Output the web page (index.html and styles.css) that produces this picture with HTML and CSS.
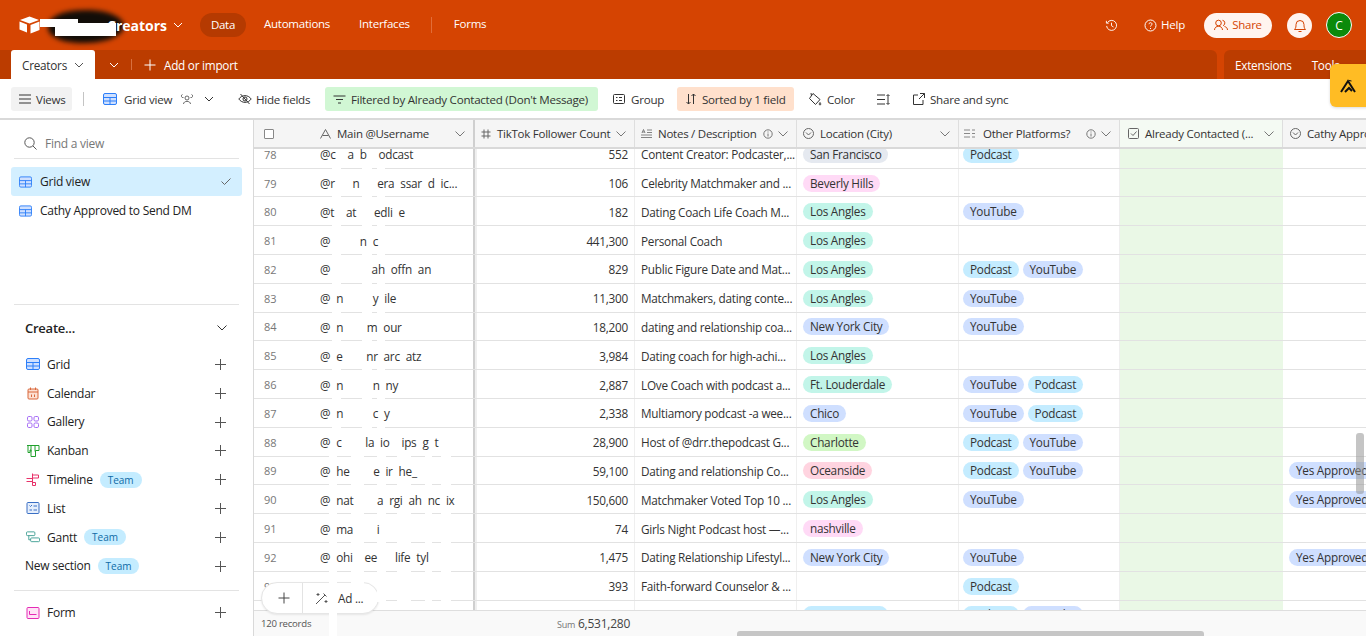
FILE: index.html
```html
<!DOCTYPE html>
<html lang="en">
<head>
<meta charset="utf-8">
<title>Creators</title>
<link rel="stylesheet" href="styles.css">
</head>
<body>
<header class="top">
  <div class="brand">
    <svg class="logo" width="22" height="18" viewBox="0 0 22 18"><path fill="#fff" d="M10.500 0.500 1 4l9.500 3.600L20 4z"/><path fill="#fff" d="M11.500 9v8.500l9-3.500V5.500z"/><path fill="#fff" d="M0.500 5.500v8l7.500 3V8.500z"/></svg>
    <i class="smudge"></i>
    <span class="base-name">Creators</span>
    <i class="blank blank-a"></i>
    <i class="blank blank-b"></i>
    <svg class="chev" width="10" height="6" viewBox="0 0 10 6"><path d="M1 1l4 4 4-4" fill="none" stroke="#fff" stroke-width="1"/></svg>
  </div>
  <nav class="nav">
    <a class="nav-pill">Data</a>
    <a class="nav-link">Automations</a>
    <a class="nav-link">Interfaces</a>
    <i class="nav-div"></i>
    <a class="nav-link">Forms</a>
  </nav>
  <div class="top-right">
    <svg width="13" height="13" viewBox="0 0 14 14" fill="none" stroke="#fff"><path d="M2.500 4a5.400 5.400 0 1 1-.8 3.500M1.500 2v2.500h2.500M7 4v3.300l2.200 1.300"/></svg>
    <span class="help"><svg width="13" height="13" viewBox="0 0 13 13" fill="none" stroke="#fff"><circle cx="6.500" cy="6.500" r="5.500"/><path d="M5 5.200c0-2 3-2 3-.1 0 1.200-1.500 1.200-1.500 2.500M6.500 9v1"/></svg>Help</span>
    <span class="share"><svg width="14" height="12" viewBox="0 0 14 12" fill="none" stroke="#d54402"><circle cx="4.500" cy="4" r="2.800"/><path d="M.5 11c0-5 8-5 8 0M8.500 1.300a2.800 2.800 0 0 1 .5 5.400M10.500 7.500c2 .5 3 1.800 3 3.500"/></svg>Share</span>
    <span class="bell"><svg width="14" height="15" viewBox="0 0 14 15" fill="none" stroke="#d54402"><path d="M1.500 11.500h11c-1.500-1.500-1.500-3-1.500-5a4 4 0 0 0-8 0c0 2 0 3.500-1.500 5zM5.500 13.500h3"/></svg></span>
    <span class="avatar">C</span>
  </div>
</header>

<div class="tabs">
  <div class="tabs-main">
    <div class="tab-active">Creators<svg width="10" height="6" viewBox="0 0 10 6"><path d="M1 1l4 4 4-4" fill="none" stroke="#555"/></svg></div>
    <svg class="tab-chev" width="10" height="6" viewBox="0 0 10 6"><path d="M1 1l4 4 4-4" fill="none" stroke="#fff"/></svg>
    <i class="tab-div"></i>
    <svg width="12" height="12" viewBox="0 0 12 12"><path d="M6 .5v11M.5 6h11" stroke="#fff" fill="none"/></svg>
    <span class="add-import">Add or import</span>
  </div>
  <div class="tabs-side"><span>Extensions</span><span>Tools</span></div>
</div>

<div class="toolbar">
  <span class="tool tool-views"><svg width="12" height="10" viewBox="0 0 12 10"><path d="M0 1h12M0 5h12M0 9h12" stroke="#333" fill="none"/></svg>Views</span>
  <i class="tool-div"></i>
  <span class="tool tool-grid">
    <svg class="blue-ic" width="14" height="12" viewBox="0 0 14 12"><rect x=".5" y=".5" width="13" height="11" rx="1.500" fill="#cfe0ff" stroke="#2d7ff9"/><path d="M.5 4.500h13M.5 8h13M7 4.500V11.500" stroke="#2d7ff9" fill="none"/></svg>
    Grid view
    <svg class="people" width="14" height="12" viewBox="0 0 14 12" fill="none" stroke="#444" stroke-width=".8"><circle cx="7" cy="5" r="2"/><path d="M3.500 11c0-3.500 7-3.500 7 0M2.500 1.500a1.500 1.500 0 1 0 1 3M11.500 1.500a1.500 1.500 0 1 1-1 3"/></svg>
    <svg class="tool-chev" width="10" height="6" viewBox="0 0 10 6"><path d="M1 1l4 4 4-4" fill="none" stroke="#333"/></svg>
  </span>
  <span class="tool tool-hide"><svg width="14" height="12" viewBox="0 0 14 12" fill="none" stroke="#333"><path d="M.8 6C4 1.500 10 1.500 13.200 6 10 10.500 4 10.500.8 6z"/><circle cx="7" cy="6" r="2"/><path d="M2.500 1l9 10"/></svg>Hide fields</span>
  <span class="tool tool-filter"><svg width="13" height="9" viewBox="0 0 13 9"><path d="M.5 1h12M3 4.500h7M5 8h3" stroke="#333" fill="none"/></svg>Filtered by Already Contacted (Don't Message)</span>
  <span class="tool tool-group"><svg width="12" height="10" viewBox="0 0 12 10" fill="none" stroke="#333"><rect x=".5" y=".5" width="11" height="9" rx="1"/><path d="M3 3.500h1.500M6 3.500h3M3 6.500h1.500M6 6.500h3"/></svg>Group</span>
  <span class="tool tool-sort"><svg width="10" height="12" viewBox="0 0 10 12" fill="none" stroke="#333"><path d="M2.500 1v10M.5 9l2 2 2-2M7.500 11V1M5.500 3l2-2 2 2"/></svg>Sorted by 1 field</span>
  <span class="tool tool-color"><svg width="14" height="14" viewBox="0 0 14 14" fill="none" stroke="#333"><path d="M5 1.500l7 6-4.500 5L1.500 6.500zM3.500 4L3 1M12 10.500c1 1 1 2.500 0 2.500s-1-1.500 0-2.500z"/></svg>Color</span>
  <span class="tool tool-height"><svg width="13" height="11" viewBox="0 0 13 11" fill="none" stroke="#333"><path d="M0 1h8M0 5.500h8M0 10h8M11 1v9M9.500 2l1.500-1.500L12.500 2M9.500 9l1.500 1.500L12.500 9"/></svg></span>
  <span class="tool tool-sync"><svg width="12" height="12" viewBox="0 0 12 12" fill="none" stroke="#333"><path d="M5 2H.5v9.500H10V7M7 .5h4.500V5M11.500 .5 6 6"/></svg>Share and sync</span>
</div>

<div class="badge-tab"><svg width="17" height="14" viewBox="0 0 17 14" fill="none" stroke="#111" stroke-width="2"><path d="M1 13 8 2l7 11"/><path d="M5 13l4-4 3 3"/><path d="M9 1.500l2.500 .5" stroke-width="1"/></svg></div>

<main class="workspace">
  <aside class="sidebar">
    <div class="find"><svg width="13" height="13" viewBox="0 0 13 13" fill="none" stroke="#555"><circle cx="5.500" cy="5.500" r="4.700"/><path d="M9 9l3.500 3.500"/></svg><span>Find a view</span></div>
    <div class="view view-active">
      <svg width="13" height="12" viewBox="0 0 14 12"><rect x=".5" y=".5" width="13" height="11" rx="1.500" fill="#cfe0ff" stroke="#2d7ff9"/><path d="M.5 4.500h13M.5 8h13M7 4.500V11.500" stroke="#2d7ff9" fill="none"/></svg>
      <span class="view-name">Grid view</span>
      <svg width="10" height="7" viewBox="0 0 10 7"><path d="M.5 3.500 3.500 6.500 9.500.5" fill="none" stroke="#666"/></svg>
    </div>
    <div class="view">
      <svg width="13" height="12" viewBox="0 0 14 12"><rect x=".5" y=".5" width="13" height="11" rx="1.500" fill="#cfe0ff" stroke="#2d7ff9"/><path d="M.5 4.500h13M.5 8h13M7 4.500V11.500" stroke="#2d7ff9" fill="none"/></svg>
      <span class="view-name">Cathy Approved to Send DM</span>
    </div>
    <div class="spacer"></div>
    <div class="create">
      <div class="create-head"><span>Create...</span><svg width="10" height="6" viewBox="0 0 10 6"><path d="M.5.500l4.500 4.500 4.500-4.500" fill="none" stroke="#333"/></svg></div>
      <div class="create-item"><svg width="13" height="12" viewBox="0 0 14 12"><rect x=".5" y=".5" width="13" height="11" rx="1.500" fill="#cfe0ff" stroke="#2d7ff9"/><path d="M.5 4.500h13M.5 8h13M7 4.500V11.500" stroke="#2d7ff9" fill="none"/></svg><span>Grid</span><b class="plus"></b></div>
      <div class="create-item"><svg width="13" height="13" viewBox="0 0 13 13" fill="none" stroke="#d9683c"><rect x="1.500" y="2" width="10" height="10" rx="1" fill="#fde0d2"/><path d="M1.500 5h10M4 .5V3M9 .5V3M5 7.500v2.500M8 7.500v2.500"/></svg><span>Calendar</span><b class="plus"></b></div>
      <div class="create-item"><svg width="13" height="12" viewBox="0 0 13 12" fill="none" stroke="#a56bf5"><rect x="1" y=".5" width="4.500" height="4.500" rx="1.300"/><rect x="7.500" y=".5" width="4.500" height="4.500" rx="1.300"/><rect x="1" y="7" width="4.500" height="4.500" rx="1.300"/><rect x="7.500" y="7" width="4.500" height="4.500" rx="1.300"/></svg><span>Gallery</span><b class="plus"></b></div>
      <div class="create-item"><svg width="13" height="12" viewBox="0 0 13 12" fill="none" stroke="#20a02c"><path d="M.5.500h12v5h-3.500v6h-4.500v-6.500H3.500v2.500H1.500V.5M4.500.5v6M8.500.5v6"/></svg><span>Kanban</span><b class="plus"></b></div>
      <div class="create-item"><svg width="14" height="13" viewBox="0 0 14 13" fill="none" stroke="#e8326a"><path d="M6.500.5v12M6.500 2h6v3h-6M.5 5.500h6v3h-6M6.500 9.500h3v3h-3"/></svg><span>Timeline</span><em class="team">Team</em><b class="plus"></b></div>
      <div class="create-item"><svg width="13" height="12" viewBox="0 0 13 12" fill="none" stroke="#3a6fc4"><rect x=".5" y=".5" width="12" height="11" rx="1" fill="#e6effc"/><path d="M3 3.500l1 1 1.500-1.500M7 4h3.500M3 8h2.500M7 8h3.500"/></svg><span>List</span><b class="plus"></b></div>
      <div class="create-item"><svg width="15" height="12" viewBox="0 0 15 12" fill="none" stroke="#3f9e93"><rect x=".5" y=".5" width="9" height="4" rx="1"/><rect x="5" y="7" width="9.500" height="4" rx="1"/><path d="M3 4.500V9h2"/></svg><span>Gantt</span><em class="team">Team</em><b class="plus"></b></div>
      <div class="create-item create-section"><span>New section</span><em class="team">Team</em><b class="plus"></b></div>
    </div>
    <div class="form-block">
      <div class="create-item"><svg width="13" height="12" viewBox="0 0 13 12" fill="none" stroke="#e42bb5"><rect x=".5" y=".5" width="12" height="11" rx="1" fill="#ffe3f6"/><path d="M3 4v3.500h7"/></svg><span>Form</span><b class="plus"></b></div>
    </div>
  </aside>

  <section class="grid">
    <div class="row head">
      <div class="c c-main"><span class="check"></span><svg class="ficon" width="11" height="10" viewBox="0 0 11 10"><path d="M.5 9.500 5.500.5l5 9M2.500 6.500h6" fill="none" stroke="#666"/></svg><span class="fname">Main @Username</span><svg class="hchev" width="10" height="6" viewBox="0 0 10 6"><path d="M.5.500l4.500 4.500 4.500-4.500" fill="none" stroke="#777"/></svg></div>
      <div class="c c-num"><svg class="ficon" width="10" height="10" viewBox="0 0 10 10"><path d="M3 .5v9M7 .5v9M.5 3h9M.5 7h9" fill="none" stroke="#666"/></svg><span class="fname">TikTok Follower Count</span><svg class="hchev" width="10" height="6" viewBox="0 0 10 6"><path d="M.5.500l4.500 4.500 4.500-4.500" fill="none" stroke="#777"/></svg></div>
      <div class="c c-notes"><svg class="ficon" width="11" height="9" viewBox="0 0 11 9"><path d="M1 4 2.500.5 4 4M1.500 3h2M6 1h5M6 3.500h5M0 6h11M0 8.500h11" fill="none" stroke="#666" stroke-width=".8"/></svg><span class="fname">Notes / Description</span><svg class="info" width="10" height="10" viewBox="0 0 10 10" fill="none" stroke="#777"><circle cx="5" cy="5" r="4.200"/><path d="M5 4.500v3M5 2.500v1"/></svg><svg class="hchev" width="10" height="6" viewBox="0 0 10 6"><path d="M.5.500l4.500 4.500 4.500-4.500" fill="none" stroke="#777"/></svg></div>
      <div class="c c-loc"><svg class="ficon" width="11" height="11" viewBox="0 0 11 11" fill="none" stroke="#666"><circle cx="5.500" cy="5.500" r="5"/><path d="M3 4.500l2.500 2.500L8 4.500"/></svg><span class="fname">Location (City)</span><svg class="hchev" width="10" height="6" viewBox="0 0 10 6"><path d="M.5.500l4.500 4.500 4.500-4.500" fill="none" stroke="#777"/></svg></div>
      <div class="c c-other"><svg class="ficon" width="11" height="9" viewBox="0 0 11 9" fill="none" stroke="#888"><path d="M0 1h6M0 4.500h6M0 8h6M8 1h3M8 4.500h3M8 8h3"/></svg><span class="fname">Other Platforms?</span><svg class="info" width="10" height="10" viewBox="0 0 10 10" fill="none" stroke="#777"><circle cx="5" cy="5" r="4.200"/><path d="M5 4.500v3M5 2.500v1"/></svg><svg class="hchev" width="10" height="6" viewBox="0 0 10 6"><path d="M.5.500l4.500 4.500 4.500-4.500" fill="none" stroke="#777"/></svg></div>
      <div class="c c-done head-done"><svg class="ficon" width="11" height="11" viewBox="0 0 11 11" fill="none" stroke="#666"><rect x=".5" y=".5" width="10" height="10" rx="1"/><path d="M3 5.500l2 2 3.500-4"/></svg><span class="fname">Already Contacted (...</span><svg class="hchev" width="10" height="6" viewBox="0 0 10 6"><path d="M.5.500l4.500 4.500 4.500-4.500" fill="none" stroke="#777"/></svg></div>
      <div class="c c-cathy"><svg class="ficon" width="11" height="11" viewBox="0 0 11 11" fill="none" stroke="#666"><circle cx="5.500" cy="5.500" r="5"/><path d="M3 4.500l2.500 2.500L8 4.500"/></svg><span class="fname">Cathy Appro</span></div>
    </div>

    <div class="body">
      <div class="rows">
        <div class="row"><div class="c c-main"><span class="rn">78</span><span class="u">@c<s>xx</s>a<s>x</s>b<s>xx</s>odcast</span></div><div class="c c-num">552</div><div class="c c-notes">Content Creator: Podcaster,...</div><div class="c c-loc"><span class="p gray">San Francisco</span></div><div class="c c-other"><span class="p cyan">Podcast</span></div><div class="c c-done"></div><div class="c c-cathy"></div></div>
        <div class="row"><div class="c c-main"><span class="rn">79</span><span class="u">@r<s>xxx</s>n<s>xxx</s>era<s>x</s>ssar<s>x</s>d<s>x</s>ic...</span></div><div class="c c-num">106</div><div class="c c-notes">Celebrity Matchmaker and ...</div><div class="c c-loc"><span class="p pink">Beverly Hills</span></div><div class="c c-other"></div><div class="c c-done"></div><div class="c c-cathy"></div></div>
        <div class="row"><div class="c c-main"><span class="rn">80</span><span class="u">@t<s>xx</s>at<s>xxx</s>edli<s>x</s>e</span></div><div class="c c-num">182</div><div class="c c-notes">Dating Coach Life Coach M...</div><div class="c c-loc"><span class="p teal">Los Angles</span></div><div class="c c-other"><span class="p blue">YouTube</span></div><div class="c c-done"></div><div class="c c-cathy"></div></div>
        <div class="row"><div class="c c-main"><span class="rn">81</span><span class="u">@<s>xxxxx</s>n<s>x</s>c</span></div><div class="c c-num">441,300</div><div class="c c-notes">Personal Coach</div><div class="c c-loc"><span class="p teal">Los Angles</span></div><div class="c c-other"></div><div class="c c-done"></div><div class="c c-cathy"></div></div>
        <div class="row"><div class="c c-main"><span class="rn">82</span><span class="u">@<s>xxxxxxx</s>ah<s>x</s>offn<s>x</s>an</span></div><div class="c c-num">829</div><div class="c c-notes">Public Figure Date and Mat...</div><div class="c c-loc"><span class="p teal">Los Angles</span></div><div class="c c-other"><span class="p cyan">Podcast</span><span class="p blue">YouTube</span></div><div class="c c-done"></div><div class="c c-cathy"></div></div>
        <div class="row"><div class="c c-main"><span class="rn">83</span><span class="u">@<s>x</s>n<s>xxxxx</s>y<s>x</s>ile</span></div><div class="c c-num">11,300</div><div class="c c-notes">Matchmakers, dating conte...</div><div class="c c-loc"><span class="p teal">Los Angles</span></div><div class="c c-other"><span class="p blue">YouTube</span></div><div class="c c-done"></div><div class="c c-cathy"></div></div>
        <div class="row"><div class="c c-main"><span class="rn">84</span><span class="u">@<s>x</s>n<s>xxxx</s>m<s>x</s>our</span></div><div class="c c-num">18,200</div><div class="c c-notes">dating and relationship coa...</div><div class="c c-loc"><span class="p blue">New York City</span></div><div class="c c-other"><span class="p blue">YouTube</span></div><div class="c c-done"></div><div class="c c-cathy"></div></div>
        <div class="row"><div class="c c-main"><span class="rn">85</span><span class="u">@<s>x</s>e<s>xxxx</s>nr<s>x</s>arc<s>x</s>atz</span></div><div class="c c-num">3,984</div><div class="c c-notes">Dating coach for high-achi...</div><div class="c c-loc"><span class="p teal">Los Angles</span></div><div class="c c-other"></div><div class="c c-done"></div><div class="c c-cathy"></div></div>
        <div class="row"><div class="c c-main"><span class="rn">86</span><span class="u">@<s>x</s>n<s>xxxxx</s>n<s>x</s>ny</span></div><div class="c c-num">2,887</div><div class="c c-notes">LOve Coach with podcast a...</div><div class="c c-loc"><span class="p teal">Ft. Louderdale</span></div><div class="c c-other"><span class="p blue">YouTube</span><span class="p cyan">Podcast</span></div><div class="c c-done"></div><div class="c c-cathy"></div></div>
        <div class="row"><div class="c c-main"><span class="rn">87</span><span class="u">@<s>x</s>n<s>xxxxx</s>c<s>x</s>y</span></div><div class="c c-num">2,338</div><div class="c c-notes">Multiamory podcast -a wee...</div><div class="c c-loc"><span class="p blue">Chico</span></div><div class="c c-other"><span class="p blue">YouTube</span><span class="p cyan">Podcast</span></div><div class="c c-done"></div><div class="c c-cathy"></div></div>
        <div class="row"><div class="c c-main"><span class="rn">88</span><span class="u">@<s>x</s>c<s>xxxx</s>la<s>x</s>io<s>xx</s>ips<s>x</s>g<s>x</s>t</span></div><div class="c c-num">28,900</div><div class="c c-notes">Host of @drr.thepodcast G...</div><div class="c c-loc"><span class="p green">Charlotte</span></div><div class="c c-other"><span class="p cyan">Podcast</span><span class="p blue">YouTube</span></div><div class="c c-done"></div><div class="c c-cathy"></div></div>
        <div class="row"><div class="c c-main"><span class="rn">89</span><span class="u">@<s>x</s>he<s>xxxx</s>e<s>x</s>ir<s>x</s>he_</span></div><div class="c c-num">59,100</div><div class="c c-notes">Dating and relationship Co...</div><div class="c c-loc"><span class="p rose">Oceanside</span></div><div class="c c-other"><span class="p cyan">Podcast</span><span class="p blue">YouTube</span></div><div class="c c-done"></div><div class="c c-cathy"><span class="p blue">Yes Approved</span></div></div>
        <div class="row"><div class="c c-main"><span class="rn">90</span><span class="u">@<s>x</s>nat<s>xxxx</s>a<s>x</s>rgi<s>x</s>ah<s>x</s>nc<s>x</s>ix</span></div><div class="c c-num">150,600</div><div class="c c-notes">Matchmaker Voted Top 10 ...</div><div class="c c-loc"><span class="p teal">Los Angles</span></div><div class="c c-other"><span class="p blue">YouTube</span></div><div class="c c-done"></div><div class="c c-cathy"><span class="p blue">Yes Approved</span></div></div>
        <div class="row"><div class="c c-main"><span class="rn">91</span><span class="u">@<s>x</s>ma<s>xxxx</s>i</span></div><div class="c c-num">74</div><div class="c c-notes">Girls Night Podcast host —...</div><div class="c c-loc"><span class="p pink">nashville</span></div><div class="c c-other"></div><div class="c c-done"></div><div class="c c-cathy"></div></div>
        <div class="row"><div class="c c-main"><span class="rn">92</span><span class="u">@<s>x</s>ohi<s>xx</s>ee<s>xxx</s>life<s>x</s>tyl</span></div><div class="c c-num">1,475</div><div class="c c-notes">Dating Relationship Lifestyl...</div><div class="c c-loc"><span class="p blue">New York City</span></div><div class="c c-other"><span class="p blue">YouTube</span></div><div class="c c-done"></div><div class="c c-cathy"><span class="p blue">Yes Approved</span></div></div>
        <div class="row"><div class="c c-main"><span class="rn">93</span></div><div class="c c-num">393</div><div class="c c-notes">Faith-forward Counselor &amp; ...</div><div class="c c-loc"></div><div class="c c-other"><span class="p cyan">Podcast</span></div><div class="c c-done"></div><div class="c c-cathy"></div></div>
        <div class="row"><div class="c c-main"></div><div class="c c-num"></div><div class="c c-notes"></div><div class="c c-loc"><span class="p cyan">San Francisco</span></div><div class="c c-other"><span class="p cyan">Podcast</span><span class="p blue">YouTube</span></div><div class="c c-done"></div><div class="c c-cathy"></div></div>
      </div>
    </div>

    <div class="foot">
      <span class="records">120 records</span>
      <span class="sum"><small>Sum</small> 6,531,280</span>
    </div>
    <div class="add-bar"><svg width="12" height="12" viewBox="0 0 12 12"><path d="M6 .5v11M.5 6h11" stroke="#444" fill="none"/></svg><i></i><svg width="14" height="14" viewBox="0 0 14 14" fill="none" stroke="#555"><path d="M1 13 10 4M8.500 2.500l3 3M3 2v3M1.500 3.500h3M11 9v3M9.500 10.500h3"/></svg><span>Ad ...</span></div>
    <div class="redact-top"></div>
    <div class="redact-low"></div>
    <div class="vscroll"></div>
    <div class="hscroll"></div>
  </section>
</main>
</body>
</html>
```
FILE: styles.css
```css
* { box-sizing: border-box; }
html, body { margin: 0; height: 636px; overflow: hidden; background: #fff; }
body { font-family: "Open Sans", "Noto Sans", sans-serif; font-size: 11.75px; color: #333; position: relative; letter-spacing: -0.25px; }
svg { flex: none; display: block; }

.top { height: 50px; background: #d54402; display: flex; align-items: center; color: #fff; padding: 0 14px 0 19px; font-size: 11.5px; }
.brand { display: flex; align-items: center; width: 181px; }
.base-name { font-size: 14px; font-weight: 700; margin-left: 66px; letter-spacing: 0; position: relative; z-index: 1; }
.smudge { position: absolute; left: 48px; top: 10px; width: 76px; height: 33px; background: #120d08; border-radius: 45% 55% 50% 50%; filter: blur(2.5px); transform: rotate(-2deg); }
.blank { position: absolute; background: #fff; z-index: 2; }
.blank-a { left: 40px; top: 19px; width: 38px; height: 8px; }
.blank-b { left: 55px; top: 23px; width: 61px; height: 13px; }
.chev { margin-left: 6px; }
.nav { display: flex; align-items: center; line-height: 16px; }
.nav-pill { background: #b53a01; border-radius: 12px; height: 24px; width: 46px; display: flex; align-items: center; justify-content: center; margin-right: 18px; padding-bottom: 1px; }
.nav-link { margin-right: 29px; padding-bottom: 2px; }
.nav-div { width: 1px; height: 16px; background: #e26d38; margin-right: 22px; margin-left: -8px; }
.top-right { margin-left: auto; display: flex; align-items: center; }
.help { display: flex; align-items: center; gap: 4px; margin-left: 26px; line-height: 14px; }
.share { display: flex; align-items: center; gap: 4px; background: #fff4ef; color: #d54402; border-radius: 13px; height: 25px; width: 68px; justify-content: center; margin-left: 19px; padding-bottom: 1px; }
.bell { width: 25px; height: 25px; border-radius: 50%; background: #fff4ef; display: flex; align-items: center; justify-content: center; margin-left: 15px; }
.avatar { width: 26px; height: 26px; border-radius: 50%; background: #0b8a0b; border: 1px solid #fff; display: flex; align-items: center; justify-content: center; margin-left: 14px; font-size: 12px; }

.tabs { height: 29px; display: flex; background: #d54402; color: #fff; }
.tabs-main { width: 1217px; background: #bb3c00; display: flex; align-items: center; border-top-right-radius: 6px; padding-left: 11px; }
.tab-active { width: 84px; height: 29px; background: #fff; color: #333; display: flex; align-items: center; gap: 7px; padding: 1px 0 0 11px; border-radius: 3px 3px 0 0; }
.tab-chev { margin-left: 14px; }
.tab-div { width: 1px; height: 11px; background: #d8703f; margin: 0 12px; }
.add-import { margin-left: 8px; }
.tabs-side { margin-left: 7px; flex: 1; background: #bb3c00; display: flex; align-items: center; gap: 20px; padding: 1px 0 0 11px; border-top-left-radius: 6px; overflow: hidden; }

.toolbar { height: 41px; border-bottom: 2px solid #d9d9d9; display: flex; align-items: center; padding: 1px 0 0 11px; font-size: 11.6px; white-space: nowrap; }
.tool { display: flex; align-items: center; gap: 5px; height: 24px; border-radius: 3px; flex: none; }
.tool-views { background: #f2f2f2; width: 61px; padding-left: 8px; }
.tool-div { width: 1px; height: 14px; background: #c4c4c4; margin: 0 19px 0 11px; flex: none; }
.tool-grid { gap: 0; width: 135px; }
.tool-grid .blue-ic { margin-right: 7px; }
.people { margin-left: 8px; }
.tool-chev { margin-left: 10px; }
.tool-hide { width: 87px; gap: 4px; }
.tool-filter { background: #d1f7d4; width: 273px; padding: 0 8px; }
.tool-group { margin-left: 15px; width: 49px; gap: 6px; }
.tool-sort { background: #ffe0cc; width: 117px; margin-left: 15px; padding-left: 9px; gap: 6px; }
.tool-color { margin-left: 14px; width: 47px; }
.tool-height { margin-left: 22px; width: 13px; }
.tool-sync { margin-left: 23px; }

.badge-tab { position: absolute; left: 1330px; top: 64px; width: 40px; height: 43px; background: #ffbc24; border-radius: 6px 0 0 6px; display: flex; align-items: center; justify-content: center; box-shadow: 0 1px 3px rgba(0,0,0,.15); padding-right: 4px; }

.workspace { display: flex; height: 516px; }
.sidebar { width: 253px; flex: none; padding: 0 11px; display: flex; flex-direction: column; font-size: 12px; }
.find { height: 39px; margin: 0 3px; border-bottom: 1px solid #e3e3e3; display: flex; align-items: center; gap: 8px; padding: 8px 0 0 10px; }
.find span { color: #777; }
.view { height: 29px; display: flex; align-items: center; padding: 0 11px 0 8px; gap: 8px; border-radius: 3px; }
.view-active { background: #d3efff; margin-top: 8px; }
.view-name { flex: 1; color: #222; }
.spacer { height: 80px; border-bottom: 1px solid #e3e3e3; margin: 0 3px; flex: none; }
.create { margin: 0 3px; border-bottom: 1px solid #e3e3e3; padding-bottom: 10px; }
.create-head { display: flex; align-items: center; justify-content: space-between; height: 45px; padding: 0 12px 0 11px; font-size: 13px; font-weight: 600; color: #222; }
.create-item { display: flex; align-items: center; height: 28.8px; padding-left: 12px; color: #222; position: relative; }
.create-item > svg { margin-right: 7px; width: 14px; }
.create-section { padding-left: 11px; }
.team { font-style: normal; font-size: 10px; line-height: 14px; background: #c4ecff; color: #0e6aa6; border-radius: 8px; padding: 1px 8px; margin-left: 7px; letter-spacing: 0; }
.plus { position: absolute; right: 13px; top: 9px; width: 11px; height: 11px; background: linear-gradient(#555,#555) center/11px 1px no-repeat, linear-gradient(#555,#555) center/1px 11px no-repeat; }
.form-block { margin: 7px 3px 0; }

.grid { flex: 1; min-width: 0; position: relative; border-left: 1px solid #d9d9d9; overflow: hidden; display: flex; flex-direction: column; }
.row { display: flex; height: 28.8px; border-bottom: 1px solid #e2e2e2; flex: none; }
.c { flex: none; display: flex; align-items: center; padding: 1px 6px 0; white-space: nowrap; overflow: hidden; border-right: 1px solid #efefef; color: #333; }
.c-main { width: 221px; border-right: 2px solid #cfcfcf; padding: 1px 0 0 10px; box-shadow: 2px 0 0 #efefef; }
.c-num { width: 160px; justify-content: flex-end; }
.c-notes { width: 162px; }
.c-loc { width: 162px; }
.c-other { width: 161px; gap: 4px; padding-left: 4px; }
.c-done { width: 163px; background: #eaf8e6; border-right: 0; }
.c-cathy { width: 100px; flex: 1; border-right: 0; overflow: hidden; }
.rn { width: 56px; color: #777; font-size: 11px; flex: none; letter-spacing: 0; }
.u { position: relative; z-index: 2; }
.u s { text-decoration: none; visibility: hidden; }
.p { display: inline-block; height: 17px; line-height: 17px; border-radius: 9px; padding: 0 7px; color: #333; flex: none; }
.gray { background: #e5e9f0; }
.cyan { background: #c4ecff; }
.blue { background: #cfdfff; }
.teal { background: #c2f5e9; }
.pink { background: #ffdaf6; }
.green { background: #d1f7c4; }
.rose { background: #ffd4e0; }

.head { height: 29px; background: #f5f5f5; border-bottom: 2px solid #d9d9d9; font-size: 11.5px; }
.head .c { background: #f5f5f5; border-right: 1px solid #dedede; justify-content: flex-start; position: relative; padding-top: 0; }
.head .c-main { border-right: 2px solid #cfcfcf; }
.head .c-other { padding-left: 5px; }
.head .c-other .ficon { margin-right: 4px; }
.head .head-done { background: #f4faf3; padding-left: 8px; }
.head .c-cathy { padding-left: 7px; border-right: 0; }
.check { width: 10px; height: 10px; border: 1px solid #888; background: #fff; border-radius: 1px; }
.c-main .ficon { margin-left: 46px; }
.ficon { margin-right: 6px; }
.fname { color: #333; }
.hchev { position: absolute; right: 8px; top: 11px; }
.info { position: absolute; right: 23px; top: 9px; }

.body { flex: 1; min-height: 0; overflow: hidden; position: relative; }
.rows { margin-top: -9.2px; }
.add-bar { position: absolute; left: 7px; top: 462px; width: 118px; height: 32px; background: #fff; border: 1px solid #e6e6e6; border-radius: 16px; display: flex; align-items: center; padding-left: 16px; box-shadow: 0 1px 2px rgba(0,0,0,.08); }
.add-bar i { width: 1px; height: 30px; background: #e3e3e3; margin: 0 12px; flex: none; }
.add-bar span { margin-left: 9px; position: relative; z-index: 2; white-space: nowrap; }
.foot { height: 26px; flex: none; background: #f9f9f9; border-top: 1px solid #dedede; display: flex; align-items: center; position: relative; font-size: 9.6px; padding-left: 7px; }
.records { color: #555; }
.sum { position: absolute; left: 302px; width: 74px; text-align: right; font-size: 12px; color: #444; }
.sum small { font-size: 9px; color: #777; }

.redact-top, .redact-low { position: absolute; left: 0; width: 221px; background-repeat: no-repeat; z-index: 1; pointer-events: none; }
.redact-top { top: 29px; height: 281px;
  background-image: linear-gradient(#fff,#fff), linear-gradient(#fff,#fff), linear-gradient(#fff,#fff);
  background-size: 9px 100%, 10px 100%, 8px 100%;
  background-position: 78px 0, 108px 0, 123px 0; }
.redact-low { top: 310px; height: 206px;
  background-image: linear-gradient(#fff,#fff), linear-gradient(#fff,#fff), linear-gradient(#fff,#fff), linear-gradient(#fff,#fff), linear-gradient(#fff,#fff), linear-gradient(#fff,#fff);
  background-size: 8px 100%, 13px 172px, 9px 172px, 14px 172px, 7px 172px, 10px 172px;
  background-position: 75px 0, 97px 0, 123px 0, 143px 0, 171px 0, 187px 0; }

.vscroll { position: absolute; right: 2px; top: 313px; width: 8px; height: 61px; background: rgba(150,150,150,.55); border-radius: 3px; z-index: 3; }
.hscroll { position: absolute; left: 483px; bottom: 0; width: 467px; height: 5px; background: #c6c6c6; border-radius: 3px 3px 0 0; z-index: 3; }
```
